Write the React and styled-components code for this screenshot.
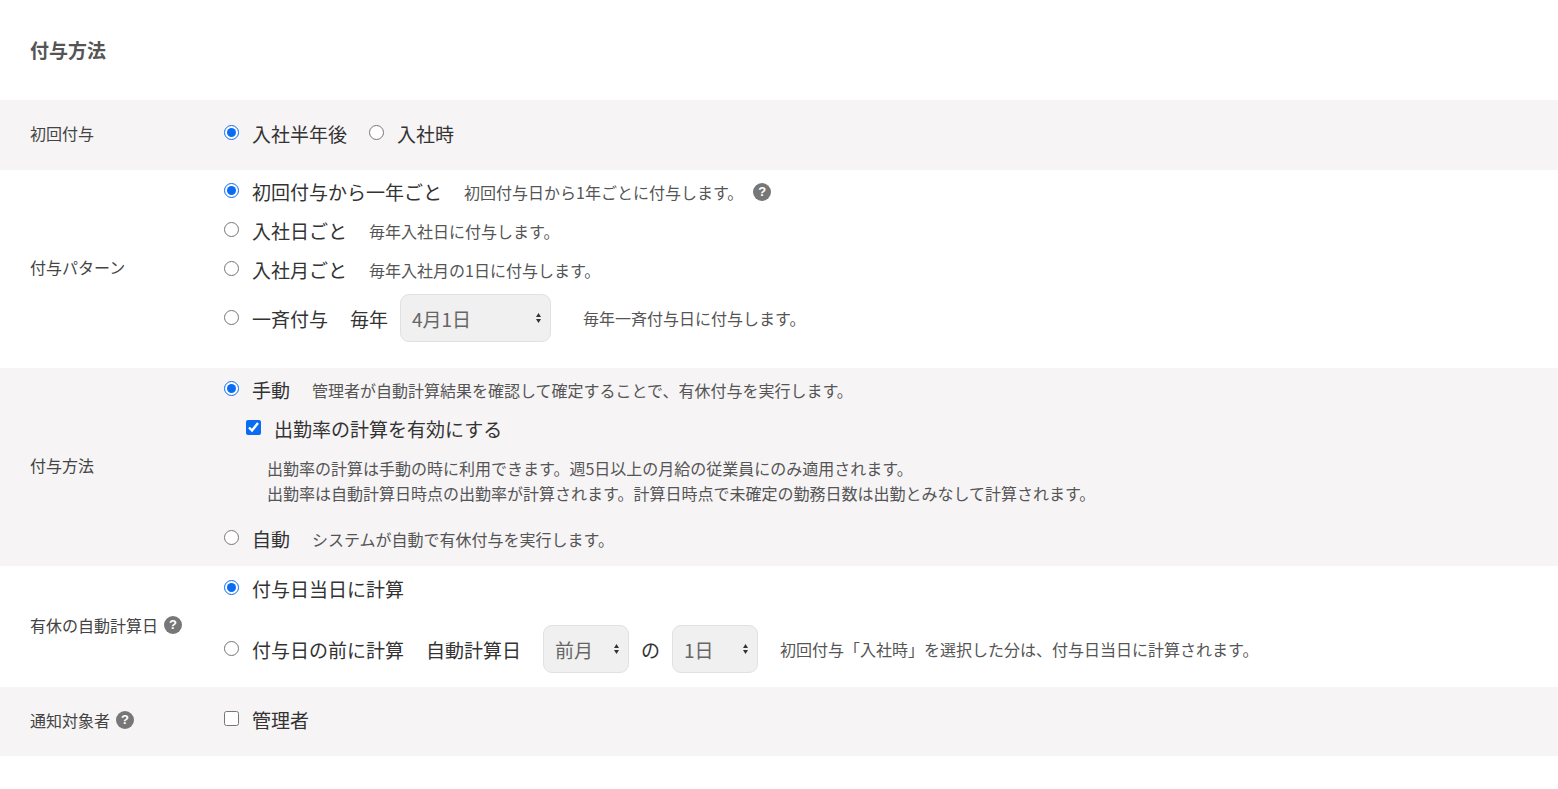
import React from "react";
import styled, { createGlobalStyle } from "styled-components";

const G = createGlobalStyle`
  body { margin: 0; background: #fff; font-family: "Noto Sans CJK JP", "Noto Sans", sans-serif; color: #333; }
`;
const Page = styled.div` width: 1558px; `;
const Heading = styled.h2`
  margin: 0; height: 100px; box-sizing: border-box; padding: 36px 0 0 30px;
  font-size: 19px; font-weight: 700; color: #555; line-height: 28px;
`;
const Row = styled.div`
  display: grid; grid-template-columns: 224px 1fr; align-items: center;
  background: ${p => (p.$gray ? "#f6f4f5" : "#fff")};
  height: ${p => p.$h}px; box-sizing: border-box;
`;
const Label = styled.div`
  padding-left: 30px; padding-bottom: 4px; font-size: 16px; color: #444; display: flex; align-items: center; gap: 6px;
`;
const Content = styled.div`
  display: flex; flex-direction: column; align-self: ${p => (p.$top ? "start" : "center")};
  padding-top: ${p => (p.$top ? 4 : 0)}px;
`;
const Line = styled.div`
  display: flex; align-items: center; height: ${p => p.$h || 39}px; padding-left: ${p => p.$indent || 0}px;
  padding-bottom: 4px; box-sizing: border-box; margin-top: ${p => p.$mt || 0}px;
`;
const Opt = styled.label`
  display: inline-flex; align-items: center; font-size: 19px; color: #333; margin-right: ${p => p.$mr || 22}px; white-space: nowrap;
  input { margin: 0 13px 0 0; width: 15px; height: 15px; accent-color: #0a6cf2; position: relative; top: -1px; }
`;
const Hint = styled.span` font-size: 16px; color: #555; white-space: nowrap; margin-right: 10px; `;
const Text = styled.span` font-size: 19px; color: #333; margin-right: ${p => p.$mr || 12}px; white-space: nowrap; `;
const Select = styled.div`
  width: ${p => p.$w}px; height: 48px; box-sizing: border-box; border: 1px solid #e2e0e1; border-radius: 9px;
  background: #f1f0f0; display: flex; align-items: center; justify-content: space-between;
  padding: 0 8px 0 11px; font-size: 19px; color: #666; margin-right: ${p => p.$mr || 12}px;
`;
const Note = styled.div` padding-left: 43px; font-size: 16px; color: #555; line-height: 25px; margin: 6px 0 15px; `;
const Help = styled.span`
  display: inline-flex; width: 18px; height: 18px; border-radius: 50%; background: #777; color: #fff;
  font-size: 13px; font-weight: 700; align-items: center; justify-content: center; font-family: "Liberation Sans", sans-serif;
`;
const Arrows = () => (
  <svg width="7" height="12" viewBox="0 0 7 12"><path d="M3.5 1L6 5H1z M3.5 11L1 7h5z" fill="#333" /></svg>
);

export default function App() {
  return (
    <Page>
      <G />
      <Heading>付与方法</Heading>
      <Row $gray $h={70}>
        <Label>初回付与</Label>
        <Content>
          <Line>
            <Opt><input type="radio" name="a" defaultChecked />入社半年後</Opt>
            <Opt><input type="radio" name="a" />入社時</Opt>
          </Line>
        </Content>
      </Row>
      <Row $h={198}>
        <Label>付与パターン</Label>
        <Content $top>
          <Line><Opt><input type="radio" name="b" defaultChecked />初回付与から一年ごと</Opt><Hint>初回付与日から1年ごとに付与します。</Hint><Help>?</Help></Line>
          <Line><Opt><input type="radio" name="b" />入社日ごと</Opt><Hint>毎年入社日に付与します。</Hint></Line>
          <Line><Opt><input type="radio" name="b" />入社月ごと</Opt><Hint>毎年入社月の1日に付与します。</Hint></Line>
          <Line $h={58}>
            <Opt><input type="radio" name="b" />一斉付与</Opt><Text>毎年</Text>
            <Select $w={151} $mr={32}>4月1日<Arrows /></Select>
            <Hint>毎年一斉付与日に付与します。</Hint>
          </Line>
        </Content>
      </Row>
      <Row $gray $h={198}>
        <Label>付与方法</Label>
        <Content $top>
          <Line><Opt><input type="radio" name="c" defaultChecked />手動</Opt><Hint>管理者が自動計算結果を確認して確定することで、有休付与を実行します。</Hint></Line>
          <Line $indent={22}><Opt><input type="checkbox" defaultChecked />出勤率の計算を有効にする</Opt></Line>
          <Note>出勤率の計算は手動の時に利用できます。週5日以上の月給の従業員にのみ適用されます。<br />出勤率は自動計算日時点の出勤率が計算されます。計算日時点で未確定の勤務日数は出勤とみなして計算されます。</Note>
          <Line><Opt><input type="radio" name="c" />自動</Opt><Hint>システムが自動で有休付与を実行します。</Hint></Line>
        </Content>
      </Row>
      <Row $h={121}>
        <Label>有休の自動計算日<Help>?</Help></Label>
        <Content $top>
          <Line $h={40}><Opt><input type="radio" name="d" defaultChecked />付与日当日に計算</Opt></Line>
          <Line $h={66} $mt={8}>
            <Opt><input type="radio" name="d" />付与日の前に計算</Opt><Text $mr={22}>自動計算日</Text>
            <Select $w={86}>前月<Arrows /></Select><Text>の</Text>
            <Select $w={86} $mr={22}>1日<Arrows /></Select>
            <Hint>初回付与「入社時」を選択した分は、付与日当日に計算されます。</Hint>
          </Line>
        </Content>
      </Row>
      <Row $gray $h={69}>
        <Label>通知対象者<Help>?</Help></Label>
        <Content><Line><Opt><input type="checkbox" />管理者</Opt></Line></Content>
      </Row>
    </Page>
  );
}
